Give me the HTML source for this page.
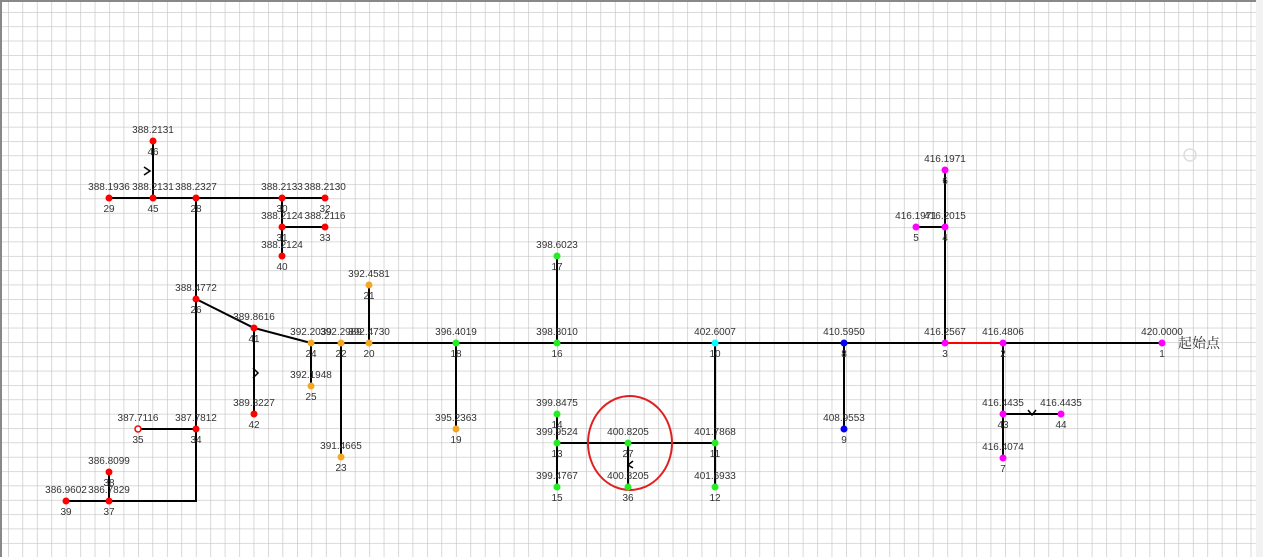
<!DOCTYPE html>
<html><head><meta charset="utf-8"><style>
html,body{margin:0;padding:0;background:#fff;}
body{width:1263px;height:557px;overflow:hidden;position:relative;}
svg{position:absolute;left:0;top:0;}
text{font-family:"Liberation Sans",Arial,sans-serif;font-size:10px;fill:#333;text-anchor:middle;}
</style></head><body>
<svg width="1263" height="557" viewBox="0 0 1263 557">
<defs>
<pattern id="g" x="8" y="12" width="14.45" height="14.35" patternUnits="userSpaceOnUse">
<path d="M0 0V14.35M0 0H14.45" stroke="#c4c4c4" stroke-width="1.3" fill="none"/>
</pattern>
</defs>
<rect x="0" y="0" width="1263" height="557" fill="url(#g)"/>
<path d="M1 557V1H1262" stroke="#888" stroke-width="2" fill="none"/>
<rect x="1256" y="0" width="7" height="557" fill="#f2f2f2"/>
<g stroke="#000" stroke-width="2" fill="none">
<path d="M311 343H945M1003 343H1162"/>
<path d="M945 343V170M916 227H945M1003 343V458M1003 414H1061"/>
<path d="M844 343V429M715 343V487M557 343V256M557 414V487M557 443H715M628 443V487"/>
<path d="M456 343V429M369 343V285M341 343V457M311 343V386"/>
<path d="M311 343L254 328L196 299M254 328V414"/>
<path d="M196 198V501H66M109 501V472M138 429H196"/>
<path d="M109 198H325M153 198V141M282 198V256M282 227H325"/>
<path d="M144 167L150 171L144 175M253 368L258 373L253 378M1028 410L1032 415L1036 410M633 461L628 465L633 468" stroke-width="1.5"/>
</g>
<path d="M945 343H1003" stroke="#f00" stroke-width="2"/>
<ellipse cx="630" cy="443" rx="42" ry="47" fill="none" stroke="#e02020" stroke-width="2"/>
<circle cx="1190" cy="155" r="6" fill="none" stroke="#ddd" stroke-width="1.5"/>
<g fill="#f0f">
<circle cx="1162" cy="343" r="3.5"/><circle cx="1003" cy="343" r="3.5"/><circle cx="945" cy="343" r="3.5"/>
<circle cx="945" cy="227" r="3.5"/><circle cx="916" cy="227" r="3.5"/><circle cx="945" cy="170" r="3.5"/>
<circle cx="1003" cy="414" r="3.5"/><circle cx="1061" cy="414" r="3.5"/><circle cx="1003" cy="458" r="3.5"/>
</g>
<g fill="#00f"><circle cx="844" cy="343" r="3.5"/><circle cx="844" cy="429" r="3.5"/></g>
<circle cx="715" cy="343" r="3.5" fill="#0ff"/>
<g fill="#2e2">
<circle cx="715" cy="443" r="3.5"/><circle cx="715" cy="487" r="3.5"/><circle cx="557" cy="343" r="3.5"/>
<circle cx="557" cy="256" r="3.5"/><circle cx="557" cy="414" r="3.5"/><circle cx="557" cy="443" r="3.5"/>
<circle cx="557" cy="487" r="3.5"/><circle cx="628" cy="443" r="3.5"/><circle cx="628" cy="487" r="3.5"/>
<circle cx="456" cy="343" r="3.5"/>
</g>
<g fill="#f5a623">
<circle cx="456" cy="429" r="3.5"/><circle cx="369" cy="343" r="3.5"/><circle cx="369" cy="285" r="3.5"/>
<circle cx="341" cy="343" r="3.5"/><circle cx="341" cy="457" r="3.5"/><circle cx="311" cy="343" r="3.5"/>
<circle cx="311" cy="386" r="3.5"/>
</g>
<g fill="#f00">
<circle cx="254" cy="328" r="3.5"/><circle cx="254" cy="414" r="3.5"/><circle cx="196" cy="299" r="3.5"/>
<circle cx="196" cy="198" r="3.5"/><circle cx="153" cy="198" r="3.5"/><circle cx="109" cy="198" r="3.5"/>
<circle cx="153" cy="141" r="3.5"/><circle cx="282" cy="198" r="3.5"/><circle cx="325" cy="198" r="3.5"/>
<circle cx="282" cy="227" r="3.5"/><circle cx="325" cy="227" r="3.5"/><circle cx="282" cy="256" r="3.5"/>
<circle cx="196" cy="429" r="3.5"/><circle cx="109" cy="501" r="3.5"/>
<circle cx="109" cy="472" r="3.5"/><circle cx="66" cy="501" r="3.5"/>
</g>
<circle cx="138" cy="429" r="3" fill="#fff" stroke="#f00" stroke-width="1.5"/>
<g>
<text x="1162" y="335">420.0000</text><text x="1162" y="357">1</text>
<text x="1003" y="335">416.4806</text><text x="1003" y="357">2</text>
<text x="945" y="335">416.2567</text><text x="945" y="357">3</text>
<text x="945" y="219">416.2015</text><text x="945" y="241">4</text>
<text x="916" y="219">416.1971</text><text x="916" y="241">5</text>
<text x="945" y="162">416.1971</text><text x="945" y="184">6</text>
<text x="1003" y="406">416.4435</text><text x="1003" y="428">43</text>
<text x="1061" y="406">416.4435</text><text x="1061" y="428">44</text>
<text x="1003" y="450">416.4074</text><text x="1003" y="472">7</text>
<text x="844" y="335">410.5950</text><text x="844" y="357">8</text>
<text x="844" y="421">408.9553</text><text x="844" y="443">9</text>
<text x="715" y="335">402.6007</text><text x="715" y="357">10</text>
<text x="715" y="435">401.7868</text><text x="715" y="457">11</text>
<text x="715" y="479">401.6933</text><text x="715" y="501">12</text>
<text x="557" y="335">398.8010</text><text x="557" y="357">16</text>
<text x="557" y="248">398.6023</text><text x="557" y="270">17</text>
<text x="557" y="406">399.8475</text><text x="557" y="428">14</text>
<text x="557" y="435">399.9524</text><text x="557" y="457">13</text>
<text x="557" y="479">399.4767</text><text x="557" y="501">15</text>
<text x="628" y="435">400.8205</text><text x="628" y="457">27</text>
<text x="628" y="479">400.8205</text><text x="628" y="501">36</text>
<text x="456" y="335">396.4019</text><text x="456" y="357">18</text>
<text x="456" y="421">395.2363</text><text x="456" y="443">19</text>
<text x="369" y="335">392.4730</text><text x="369" y="357">20</text>
<text x="369" y="277">392.4581</text><text x="369" y="299">21</text>
<text x="341" y="335">392.2989</text><text x="341" y="357">22</text>
<text x="341" y="449">391.4665</text><text x="341" y="471">23</text>
<text x="311" y="335">392.2039</text><text x="311" y="357">24</text>
<text x="311" y="378">392.1948</text><text x="311" y="400">25</text>
<text x="254" y="320">389.8616</text><text x="254" y="342">41</text>
<text x="254" y="406">389.8227</text><text x="254" y="428">42</text>
<text x="196" y="291">388.4772</text><text x="196" y="313">26</text>
<text x="196" y="190">388.2327</text><text x="196" y="212">28</text>
<text x="153" y="190">388.2131</text><text x="153" y="212">45</text>
<text x="109" y="190">388.1936</text><text x="109" y="212">29</text>
<text x="153" y="133">388.2131</text><text x="153" y="155">46</text>
<text x="282" y="190">388.2133</text><text x="282" y="212">30</text>
<text x="325" y="190">388.2130</text><text x="325" y="212">32</text>
<text x="282" y="219">388.2124</text><text x="282" y="241">31</text>
<text x="325" y="219">388.2116</text><text x="325" y="241">33</text>
<text x="282" y="248">388.2124</text><text x="282" y="270">40</text>
<text x="196" y="421">387.7812</text><text x="196" y="443">34</text>
<text x="138" y="421">387.7116</text><text x="138" y="443">35</text>
<text x="109" y="493">386.7829</text><text x="109" y="515">37</text>
<text x="109" y="464">386.8099</text><text x="109" y="486">38</text>
<text x="66" y="493">386.9602</text><text x="66" y="515">39</text>
<text x="1199" y="348" style="font-family:'Liberation Serif','Noto Serif CJK SC',serif;font-size:14px;fill:#333">起始点</text>
</g>
</svg>
</body></html>
